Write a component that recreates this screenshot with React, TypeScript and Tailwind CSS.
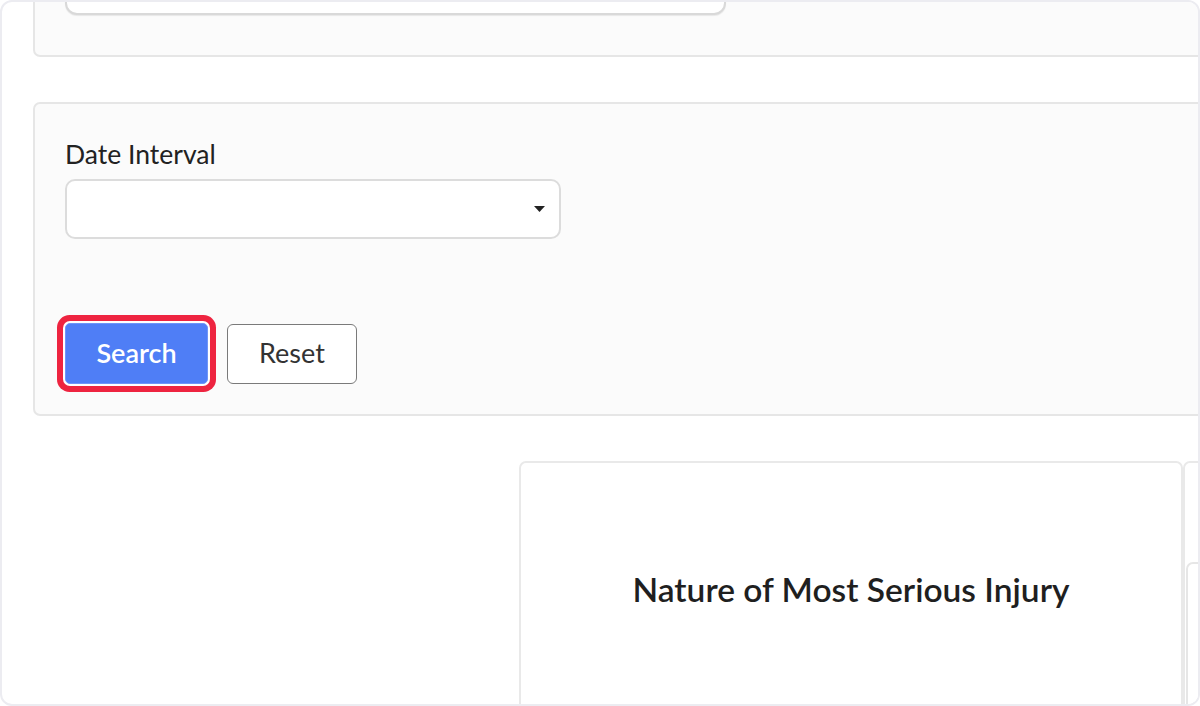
export default function App() {
  return (
    <div className="w-[1200px] h-[706px] bg-white font-['Lato','Noto_Sans',sans-serif]">
      <div className="h-full w-full overflow-hidden rounded-[12px] border-2 border-[#ececf1] bg-white pl-[31px]">
        {/* Card 1 (clipped at top) */}
        <div className="mt-[-79px] w-[1200px] rounded-[7px] border-2 border-[#e6e6e6] bg-[#fbfbfb] pb-[40px] pl-[30px] pt-[30px]">
          <div className="h-[60px] w-[661px] rounded-[12px] border-2 border-[#d9d9d9] bg-white shadow-[0_1px_1px_rgba(0,0,0,0.08)]" />
        </div>

        {/* Card 2 */}
        <div className="mt-[45px] w-[1200px] rounded-[7px] border-2 border-[#e6e6e6] bg-[#fbfbfb] pb-[30px] pl-[30px] pt-[36px]">
          <div className="text-[26.5px] leading-[28px] text-[#222]">Date Interval</div>
          <div className="mt-[11px] flex h-[60px] w-[496px] items-center justify-end rounded-[10px] border-2 border-[#dcdcdc] bg-white pr-[14px]">
            <svg width="11" height="6" viewBox="0 0 11 6">
              <path d="M0 0 L11 0 L5.5 6 Z" fill="#222" />
            </svg>
          </div>
          <div className="mt-[84px] flex items-center gap-[19px]">
            <button className="h-[61px] w-[143px] rounded-[5px] border border-[#6f95f8] bg-[#4f7ef6] text-[27px] font-semibold text-white ring-[6px] ring-[#ee2440] ring-offset-2 ring-offset-white">
              Search
            </button>
            <button className="h-[60px] w-[130px] rounded-[6px] border-[1.5px] border-[#7a7a7a] bg-white text-[27px] text-[#333]">
              Reset
            </button>
          </div>
        </div>

        {/* Lower section */}
        <div className="mt-[45px] flex pl-[486px]">
          <div className="flex h-[300px] w-[664px] shrink-0 justify-center rounded-[7px] border-2 border-[#e9e9e9] bg-white pt-[107px]">
            <div className="text-[33.5px] font-semibold leading-[38px] text-[#1f1f1f]">
              Nature of Most Serious Injury
            </div>
          </div>
          <div className="h-[300px] w-[200px] shrink-0 rounded-[7px] border-2 border-[#e9e9e9] bg-white pl-[1px] pt-[99px]">
            <div className="h-[200px] w-[190px] rounded-[7px] border-2 border-[#e6e6e6] bg-white" />
          </div>
        </div>
      </div>
    </div>
  );
}
